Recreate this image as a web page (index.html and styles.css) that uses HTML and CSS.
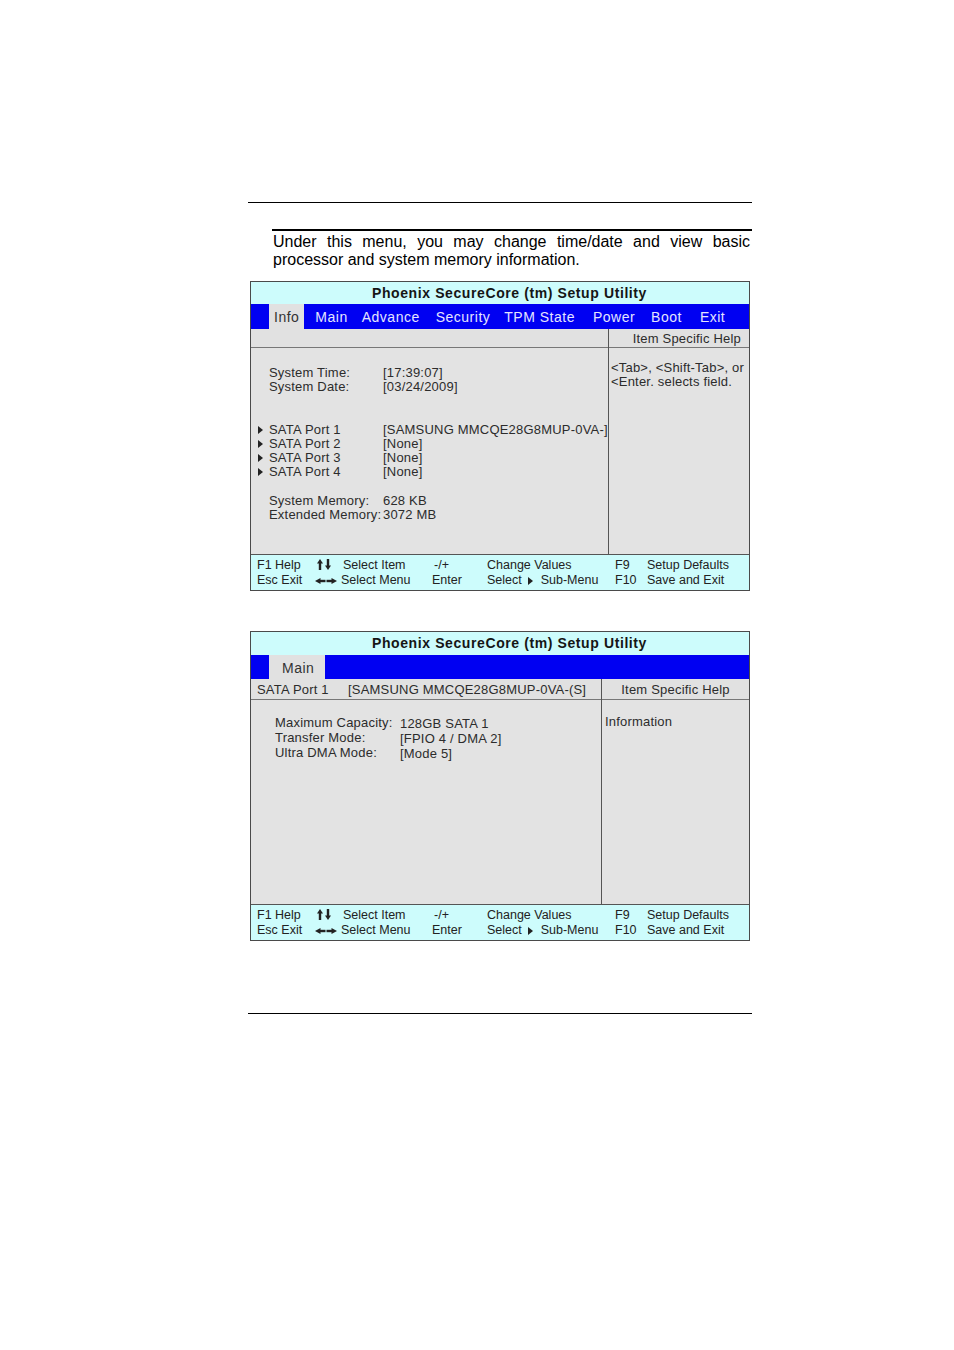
FILE: index.html
```html
<!DOCTYPE html>
<html>
<head>
<meta charset="utf-8">
<title>Info Menu</title>
<link rel="stylesheet" href="styles.css">
</head>
<body>
<div class="page">
  <div class="rule-top"></div>
  <div class="rule-section"></div>
  <p class="intro">Under this menu, you may change time/date and view basic processor and system memory information.</p>

  <div class="bios">
    <div class="bios-title">Phoenix SecureCore (tm) Setup Utility</div>
    <div class="bios-menu">
      <span class="menu-item active">Info</span>
      <span class="menu-item">Main</span>
      <span class="menu-item">Advance</span>
      <span class="menu-item m2">Security</span>
      <span class="menu-item">TPM State</span>
      <span class="menu-item m4">Power</span>
      <span class="menu-item m2">Boot</span>
      <span class="menu-item m4">Exit</span>
    </div>
    <div class="bios-body cols-info">
      <div class="pane">
        <div class="pane-head"></div>
        <div class="pane-content info-content">
          <div class="row"><span class="mark"></span><span class="label">System Time:</span><span class="value">[17:39:07]</span></div>
          <div class="row"><span class="mark"></span><span class="label">System Date:</span><span class="value">[03/24/2009]</span></div>
          <div class="row gap2"><span class="mark"><i class="tri"></i></span><span class="label">SATA Port 1</span><span class="value">[SAMSUNG MMCQE28G8MUP-0VA-]</span></div>
          <div class="row"><span class="mark"><i class="tri"></i></span><span class="label">SATA Port 2</span><span class="value">[None]</span></div>
          <div class="row"><span class="mark"><i class="tri"></i></span><span class="label">SATA Port 3</span><span class="value">[None]</span></div>
          <div class="row"><span class="mark"><i class="tri"></i></span><span class="label">SATA Port 4</span><span class="value">[None]</span></div>
          <div class="row gap1"><span class="mark"></span><span class="label">System Memory:</span><span class="value">628 KB</span></div>
          <div class="row"><span class="mark"></span><span class="label">Extended Memory:</span><span class="value">3072 MB</span></div>
        </div>
      </div>
      <div class="pane help-pane">
        <div class="pane-head help-head-right">Item Specific Help</div>
        <div class="help-text">&lt;Tab&gt;, &lt;Shift-Tab&gt;, or<br>&lt;Enter. selects field.</div>
      </div>
    </div>
    <div class="bios-footer">
      <span>F1 Help</span>
      <span class="ic-cell ic-up"><svg class="ic-ud" width="14" height="11" viewBox="0 0 14 11"><polygon points="0,4.5 3,0 6,4.5"/><rect x="1.8" y="4" width="2.4" height="7"/><polygon points="8,6.5 11,11 14,6.5"/><rect x="9.8" y="0" width="2.4" height="7"/></svg><span class="ic-text">Select Item</span></span>
      <span class="c3a">-/+</span>
      <span>Change Values</span>
      <span>F9</span>
      <span>Setup Defaults</span>
      <span>Esc Exit</span>
      <span class="ic-cell"><svg class="ic-lr" width="22" height="6" viewBox="0 0 22 6"><polygon points="0,3 5.5,0 5.5,6"/><rect x="4" y="1.8" width="6.5" height="2.4"/><rect x="11.5" y="1.8" width="6.5" height="2.4"/><polygon points="16.5,0 22,3 16.5,6"/></svg><span class="ic-text">Select Menu</span></span>
      <span>Enter</span>
      <span class="sub-cell">Select <i class="tri tri-sm"></i> Sub-Menu</span>
      <span>F10</span>
      <span>Save and Exit</span>
    </div>
  </div>

  <div class="bios bios-second">
    <div class="bios-title">Phoenix SecureCore (tm) Setup Utility</div>
    <div class="bios-menu">
      <span class="menu-item active solo">Main</span>
    </div>
    <div class="bios-body cols-sata">
      <div class="pane">
        <div class="pane-head tall-head"><span class="head-label">SATA Port 1</span><span>[SAMSUNG MMCQE28G8MUP-0VA-(S]</span></div>
        <div class="pane-content sata-content">
          <div class="srow"><span class="slabel">Maximum Capacity:</span><span class="svalue">128GB SATA 1</span></div>
          <div class="srow"><span class="slabel">Transfer Mode:</span><span class="svalue">[FPIO 4 / DMA 2]</span></div>
          <div class="srow"><span class="slabel">Ultra DMA Mode:</span><span class="svalue">[Mode 5]</span></div>
        </div>
      </div>
      <div class="pane help-pane">
        <div class="pane-head tall-head help-head-center">Item Specific Help</div>
        <div class="help-text help-info">Information</div>
      </div>
    </div>
    <div class="bios-footer">
      <span>F1 Help</span>
      <span class="ic-cell ic-up"><svg class="ic-ud" width="14" height="11" viewBox="0 0 14 11"><polygon points="0,4.5 3,0 6,4.5"/><rect x="1.8" y="4" width="2.4" height="7"/><polygon points="8,6.5 11,11 14,6.5"/><rect x="9.8" y="0" width="2.4" height="7"/></svg><span class="ic-text">Select Item</span></span>
      <span class="c3a">-/+</span>
      <span>Change Values</span>
      <span>F9</span>
      <span>Setup Defaults</span>
      <span>Esc Exit</span>
      <span class="ic-cell"><svg class="ic-lr" width="22" height="6" viewBox="0 0 22 6"><polygon points="0,3 5.5,0 5.5,6"/><rect x="4" y="1.8" width="6.5" height="2.4"/><rect x="11.5" y="1.8" width="6.5" height="2.4"/><polygon points="16.5,0 22,3 16.5,6"/></svg><span class="ic-text">Select Menu</span></span>
      <span>Enter</span>
      <span class="sub-cell">Select <i class="tri tri-sm"></i> Sub-Menu</span>
      <span>F10</span>
      <span>Save and Exit</span>
    </div>
  </div>

  <div class="rule-bottom"></div>
</div>
</body>
</html>
```

FILE: styles.css
```css
* { box-sizing: border-box; }
html, body { margin: 0; padding: 0; background: #fff; }
body { font-family: "Liberation Sans", Arial, Helvetica, sans-serif; color: #000; }

.page {
  width: 954px;
  min-height: 1350px;
  padding: 202px 0 0 248px;
}

.rule-top { width: 504px; height: 1px; background: #000; }
.rule-section { width: 480px; height: 2px; background: #000; margin: 26px 0 0 24px; }
.rule-bottom { width: 504px; height: 1px; background: #000; margin-top: 72px; }

.intro {
  margin: 2px 0 0 25px;
  width: 477px;
  font-size: 16px;
  line-height: 18px;
  text-align: justify;
  color: #000;
}

.bios {
  width: 500px;
  margin: 12px 0 0 2px;
  border: 1px solid #4a4a4a;
  color: #2c2c2c;
}
.bios-second { margin-top: 40px; }

.bios-title {
  height: 22px;
  line-height: 22px;
  background: #cdfcfc;
  text-align: center;
  padding-left: 19px;
  font-weight: bold;
  font-size: 14px;
  letter-spacing: 0.6px;
  color: #151515;
}
.bios-second .bios-title { height: 23px; line-height: 23px; }

.bios-menu {
  height: 25px;
  background: #0000f2;
  display: flex;
  gap: 4px;
  padding-left: 18px;
}
.bios-second .bios-menu { height: 24px; }
.menu-item {
  padding: 0 5px;
  line-height: 26px;
  font-size: 14px;
  letter-spacing: 0.5px;
  color: #e4e4ff;
}
.menu-item.m2 { margin-left: 2px; }
.menu-item.m4 { margin-left: 4px; }
.menu-item.active { background: #e1e1e1; color: #333; margin-right: 2px; }
.menu-item.solo { padding: 0 11px 0 13px; line-height: 27px; }

.bios-body {
  display: grid;
  height: 225px;
  background: #e3e3e3;
  font-size: 13px;
  letter-spacing: 0.2px;
}
.cols-info { grid-template-columns: 357px 1fr; }
.cols-sata { grid-template-columns: 350px 1fr; }

.pane { display: flex; flex-direction: column; }
.help-pane { border-left: 1px solid #555; }

.pane-head {
  height: 19px;
  line-height: 20px;
  border-bottom: 1px solid #777;
  background: #e1e1e1;
}
.tall-head { height: 21px; line-height: 22px; }
.help-head-right { text-align: right; padding-right: 8px; }
.help-head-center { text-align: center; }
.head-label { display: inline-block; padding-left: 6px; width: 97px; }

.info-content { padding-top: 18px; }
.row { display: flex; line-height: 14.2px; height: 14.2px; }
.row.gap2 { margin-top: 28.4px; }
.row.gap1 { margin-top: 14.2px; }
.mark { width: 18px; padding-left: 7px; display: flex; align-items: center; }
.label { width: 114px; white-space: nowrap; }
.value { white-space: nowrap; }

.tri {
  display: inline-block;
  width: 0;
  height: 0;
  border-top: 4px solid transparent;
  border-bottom: 4px solid transparent;
  border-left: 5px solid #222;
}
.tri-sm { margin: 0 4px 0 3px; vertical-align: -1px; }

.help-text { padding: 13px 3px 0 2px; line-height: 14.2px; white-space: nowrap; }
.help-info { padding: 15px 0 0 3px; }

.sata-content { padding: 16px 0 0 24px; }
.srow { display: flex; line-height: 14px; }
.slabel { width: 125px; white-space: nowrap; }
.svalue { white-space: nowrap; padding-top: 1px; }

.bios-footer {
  height: 36px;
  border-top: 1px solid #555;
  background: #cdfcfc;
  display: grid;
  grid-template-columns: 58px 117px 55px 128px 32px 1fr;
  grid-auto-rows: 15px;
  padding: 3px 0 0 6px;
  font-size: 12.5px;
  line-height: 15px;
  color: #222;
  white-space: nowrap;
}
.ic-cell { display: flex; align-items: center; height: 15px; }
.ic-cell svg { fill: #222; flex: none; }
.ic-up .ic-ud { margin: 0 12px 2px 2px; }
.ic-lr { margin-right: 4px; }
.c3a { padding-left: 2px; }
```
